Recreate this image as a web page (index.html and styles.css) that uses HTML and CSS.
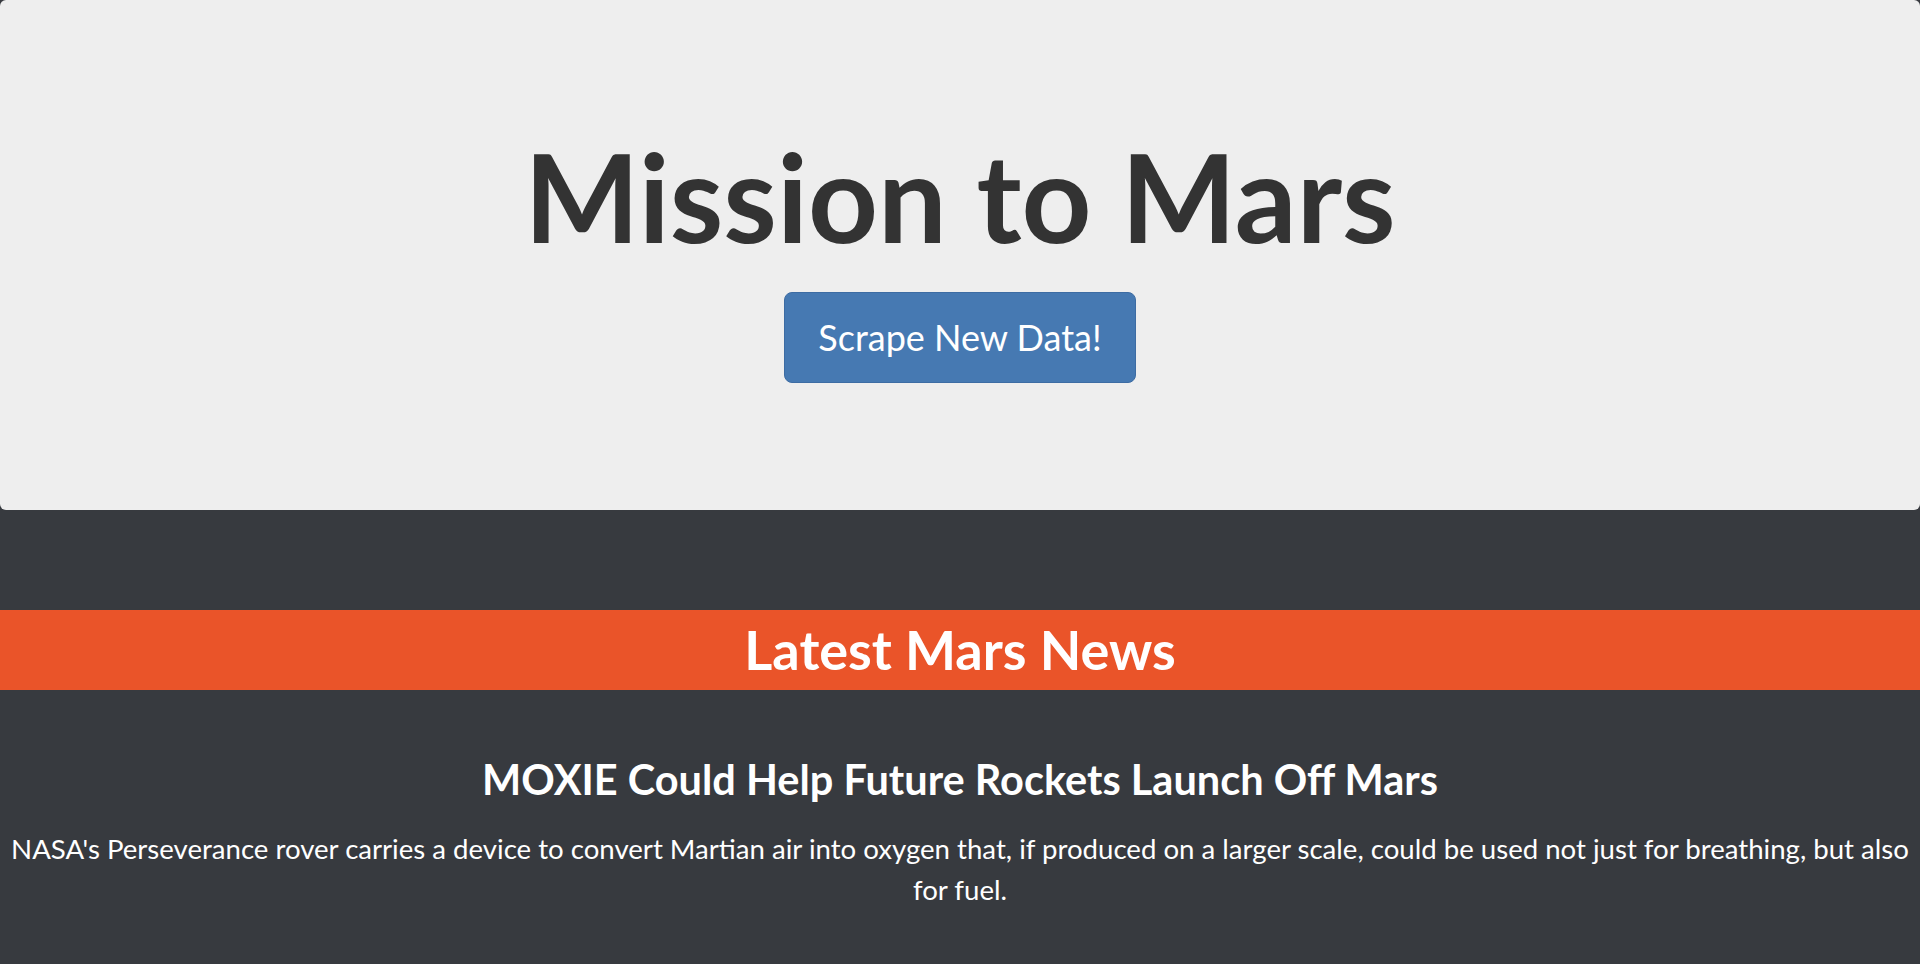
FILE: index.html
```html
<!DOCTYPE html>
<html lang="en">
<head>
	<meta charset="UTF-8">
	<title>Mission to Mars</title>
	<link rel="stylesheet" href="styles.css">
</head>
<body>
<div class="jumbotron">
	<h1>Mission to Mars</h1>
	<a class="btn" href="#">Scrape New Data!</a>
</div>

<div class="news">
	<h2 class="band">Latest Mars News</h2>
	<div class="article">
		<h3>MOXIE Could Help Future Rockets Launch Off Mars</h3>
		<p>NASA's Perseverance rover carries a device to convert Martian air into oxygen that, if produced on a larger scale, could be used not just for breathing, but also for fuel.</p>
	</div>
</div>
</body>
</html>
```

FILE: styles.css
```css
*{margin:0;padding:0;box-sizing:border-box;}
html,body{background:#373a3f;}
body{font-family:"Lato","Open Sans",sans-serif;color:#fff;}
.jumbotron{
	background:#eee;border-radius:6px;text-align:center;
	padding:134px 0 127px;
}
.jumbotron h1{font-size:122px;line-height:124px;font-weight:700;color:#333;}
.btn{
	display:inline-block;margin-top:34px;
	padding:0 33px;line-height:89px;font-size:36px;color:#fff;
	background:#4679b2;border:1px solid #3d6ca3;border-radius:8px;text-decoration:none;
}
.news{padding-top:100px;text-align:center;}
.band{background:#ea5429;height:80px;line-height:80px;font-size:54px;font-weight:700;}
.article h3{font-size:41.5px;line-height:50px;font-weight:700;margin-top:64px;}
.article p{font-size:27.6px;line-height:41px;margin-top:24px;}
```
